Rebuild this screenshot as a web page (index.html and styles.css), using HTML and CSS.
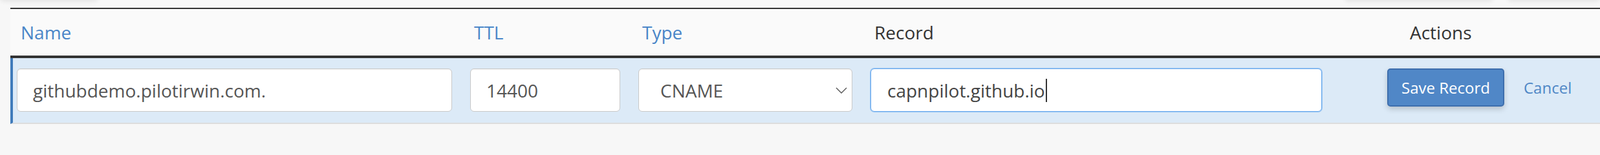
FILE: index.html
```html
<!DOCTYPE html>
<html lang="en">
<head>
<meta charset="utf-8">
<title>Zone records</title>
<link rel="stylesheet" href="styles.css">
</head>
<body>
<div class="top-strip">
  <span class="blob blob-a"></span>
  <span class="blob blob-b"></span>
  <span class="blob blob-c"></span>
</div>
<div class="records">
  <div class="head">
    <div class="th link">Name</div>
    <div class="th link">TTL</div>
    <div class="th link">Type</div>
    <div class="th">Record</div>
    <div class="th th-actions">Actions</div>
  </div>
  <div class="edit-row">
    <input class="field" type="text" value="githubdemo.pilotirwin.com.">
    <input class="field" type="text" value="14400">
    <div class="field select">
      <span>CNAME</span>
      <svg class="chev" width="18" height="10" viewBox="0 0 18 10"><path d="M1 1 L9 9 L17 1" fill="none" stroke="#555" stroke-width="1.4"/></svg>
    </div>
    <div class="field focus"><span>capnpilot.github.io</span><span class="caret"></span></div>
    <div class="actions">
      <button class="btn-save" type="button">Save Record</button>
      <a class="cancel" href="#">Cancel</a>
    </div>
  </div>
</div>
</body>
</html>
```
FILE: styles.css
```css
html, body {
  margin: 0;
  padding: 0;
}
body {
  background: #f7f7f7;
  font-family: "Open Sans", "DejaVu Sans", sans-serif;
  overflow: hidden;
  width: 2474px;
  height: 206px;
}
.top-strip {
  display: flex;
  height: 40px;
  margin-top: -40px;
}
.blob {
  display: block;
  height: 40px;
  background: #f8f8f8;
  border-radius: 6px;
  box-shadow: 0 3px 6px rgba(0, 0, 0, 0.07);
}
.blob-a { width: 160px; }
.blob-b { width: 242px; margin-left: 1927px; }
.blob-c { width: 150px; margin-left: 22px; }

.records {
  margin-left: 16px;
  margin-top: 12px;
  border-top: 2px solid #333;
}
.head {
  display: grid;
  grid-template-columns: 673px 232px 331px 698px 1fr;
  column-gap: 28px;
  padding-left: 10px;
  height: 72px;
  background: #fafafa;
  border-bottom: 4px solid #333;
}
.th {
  display: flex;
  align-items: center;
  padding-left: 6px;
  font-size: 28px;
  color: #333;
}
.th.link { color: #4a86c8; }
.th-actions { padding-left: 108px; }

.edit-row {
  display: grid;
  grid-template-columns: 673px 232px 331px 698px 1fr;
  column-gap: 28px;
  align-items: start;
  padding: 16px 0 17px 6px;
  background: #dceaf7;
  border-left: 4px solid #3f7bbb;
  border-bottom: 2px solid #dddddd;
}
.field {
  box-sizing: border-box;
  height: 67px;
  margin: 0;
  padding: 0 24px;
  border: 1px solid #c9c9c9;
  border-radius: 6px;
  background: #fff;
  box-shadow: inset 0 1px 1px rgba(0, 0, 0, 0.06);
  font-family: "Open Sans", "DejaVu Sans", sans-serif;
  font-size: 28px;
  color: #555;
  width: 100%;
  outline: none;
}
.select {
  display: flex;
  align-items: center;
  justify-content: space-between;
  padding: 0 7px 0 33px;
}
.chev { display: block; }
.focus {
  display: flex;
  align-items: center;
  padding-left: 25px;
  border-color: #6aaaee;
  box-shadow: 0 0 0 1px rgba(106, 170, 238, 0.55);
  color: #444;
}
.caret {
  display: block;
  width: 2px;
  height: 36px;
  background: #333;
  margin-left: 1px;
}
.actions {
  display: flex;
  align-items: center;
  height: 59px;
  padding-left: 73px;
  gap: 30px;
}
.btn-save {
  box-sizing: border-box;
  width: 181px;
  height: 59px;
  padding: 0;
  background: #5087c7;
  border: 2px solid #3d6ead;
  border-radius: 5px;
  box-shadow: 0 4px 9px rgba(0, 0, 0, 0.18);
  color: #fff;
  font-family: "Open Sans", "DejaVu Sans", sans-serif;
  font-size: 24px;
}
.cancel {
  font-size: 24px;
  color: #4f87c6;
  text-decoration: none;
}
```
